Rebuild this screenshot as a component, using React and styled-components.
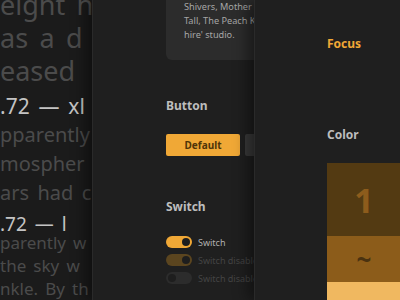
import React from 'react';
import styled, { createGlobalStyle } from 'styled-components';

const GlobalStyle = createGlobalStyle`
  html, body {
    margin: 0;
    padding: 0;
    background: #1c1c1c;
  }
  * {
    box-sizing: border-box;
  }
`;

const Stage = styled.div`
  display: flex;
  width: 400px;
  height: 300px;
  overflow: hidden;
  font-family: "Noto Sans", "Open Sans", sans-serif;
`;

const Panel = styled.div`
  flex: ${(p) => (p.$width ? `0 0 ${p.$width}px` : '1 1 auto')};
  height: 300px;
  overflow: hidden;
  background: ${(p) => p.$bg || '#1f1f1f'};
  border-left: ${(p) => (p.$edge ? '1px solid #2a2a2a' : 'none')};
  box-shadow: ${(p) => (p.$edge ? '-6px 0 14px rgba(0, 0, 0, 0.45)' : 'none')};
  padding-left: ${(p) => p.$pad || 0}px;
  display: flex;
  flex-direction: column;
`;

const TypeLine = styled.div`
  white-space: nowrap;
  font-size: ${(p) => p.$size}px;
  line-height: ${(p) => p.$lh}px;
  word-spacing: 0.16em;
  color: ${(p) => (p.$head ? '#c4c4c4' : '#4b4b4b')};
  margin-top: ${(p) => p.$mt || 0}px;
`;

const Card = styled.div`
  width: 120px;
  margin-top: -8px;
  padding: 8px 0 18px 18px;
  background: #2c2c2c;
  border-radius: 6px;
  white-space: nowrap;
  font-size: 9.2px;
  line-height: 14px;
  color: #a6a6a6;
`;

const Heading = styled.div`
  font-size: 12px;
  font-weight: 700;
  line-height: 16px;
  color: ${(p) => (p.$accent ? '#f0a836' : '#bdbdbd')};
  margin-top: ${(p) => p.$mt}px;
`;

const ButtonRow = styled.div`
  display: flex;
  gap: 5px;
  margin-top: 20px;
`;

const Button = styled.div`
  flex: 0 0 ${(p) => p.$w}px;
  height: 22px;
  border-radius: 2px;
  display: flex;
  align-items: center;
  justify-content: center;
  font-size: 10px;
  font-weight: 700;
  color: #4f3408;
  background: ${(p) => (p.$primary ? '#f0a836' : '#3a3a3a')};
`;

const SwitchList = styled.div`
  display: flex;
  flex-direction: column;
  gap: 6px;
  margin-top: 21px;
`;

const SwitchRow = styled.div`
  display: flex;
  align-items: center;
  gap: 6px;
  height: 12px;
  white-space: nowrap;
  font-size: 9px;
  color: ${(p) => (p.$muted ? '#444444' : '#b0b0b0')};
`;

const Track = styled.div`
  flex: 0 0 26px;
  height: 12px;
  border-radius: 6px;
  padding: 2px;
  display: flex;
  justify-content: ${(p) => (p.$on ? 'flex-end' : 'flex-start')};
  background: ${(p) => p.$bg};
`;

const Knob = styled.div`
  width: 8px;
  height: 8px;
  border-radius: 50%;
  background: ${(p) => p.$bg};
`;

const Swatches = styled.div`
  display: flex;
  flex-direction: column;
  margin-top: 20px;
`;

const Swatch = styled.div`
  flex: 0 0 ${(p) => p.$h}px;
  width: 74px;
  display: flex;
  align-items: center;
  justify-content: center;
  background: ${(p) => p.$bg};
  color: ${(p) => p.$fg};
  font-weight: 700;
  font-size: ${(p) => p.$size}px;
`;

export default function App() {
  return (
    <>
      <GlobalStyle />
      <Stage>
        <Panel $width={92} $bg="#1b1b1b">
          <TypeLine $size={27} $lh={33} $mt={-12}>eight h</TypeLine>
          <TypeLine $size={27} $lh={33}>as a d</TypeLine>
          <TypeLine $size={27} $lh={33}>eased</TypeLine>
          <TypeLine $size={21} $lh={28} $mt={5} $head>.72 — xl</TypeLine>
          <TypeLine $size={20} $lh={29}>pparently</TypeLine>
          <TypeLine $size={20} $lh={29}>mospher</TypeLine>
          <TypeLine $size={20} $lh={29}>ars had c</TypeLine>
          <TypeLine $size={19} $lh={26} $mt={4} $head>.72 — l</TypeLine>
          <TypeLine $size={17} $lh={22} $mt={-5}>parently w</TypeLine>
          <TypeLine $size={17} $lh={23}>the sky w</TypeLine>
          <TypeLine $size={17} $lh={23}>nkle. By th</TypeLine>
        </Panel>
        <Panel $width={162} $edge $pad={73}>
          <Card>
            Shivers, Mother F<br />
            Tall, The Peach K<br />
            hire' studio.
          </Card>
          <Heading $mt={38}>Button</Heading>
          <ButtonRow>
            <Button $primary $w={74}>Default</Button>
            <Button $w={30} />
          </ButtonRow>
          <Heading $mt={43}>Switch</Heading>
          <SwitchList>
            <SwitchRow>
              <Track $on $bg="#f0a836"><Knob $bg="#1e1e1e" /></Track>
              Switch
            </SwitchRow>
            <SwitchRow $muted>
              <Track $on $bg="#5b451f"><Knob $bg="#1e1e1e" /></Track>
              Switch disabled
            </SwitchRow>
            <SwitchRow $muted>
              <Track $bg="#2c2c2c"><Knob $bg="#1e1e1e" /></Track>
              Switch disabled
            </SwitchRow>
          </SwitchList>
        </Panel>
        <Panel $edge $pad={72}>
          <Heading $accent $mt={36}>Focus</Heading>
          <Heading $mt={75}>Color</Heading>
          <Swatches>
            <Swatch $h={73} $bg="#533a12" $fg="#8d5c1c" $size={34}>1</Swatch>
            <Swatch $h={46} $bg="#8c5c1a" $fg="#4a3210" $size={26}>~</Swatch>
            <Swatch $h={30} $bg="#f0b860" $fg="#4a3210" $size={12} />
          </Swatches>
        </Panel>
      </Stage>
    </>
  );
}
